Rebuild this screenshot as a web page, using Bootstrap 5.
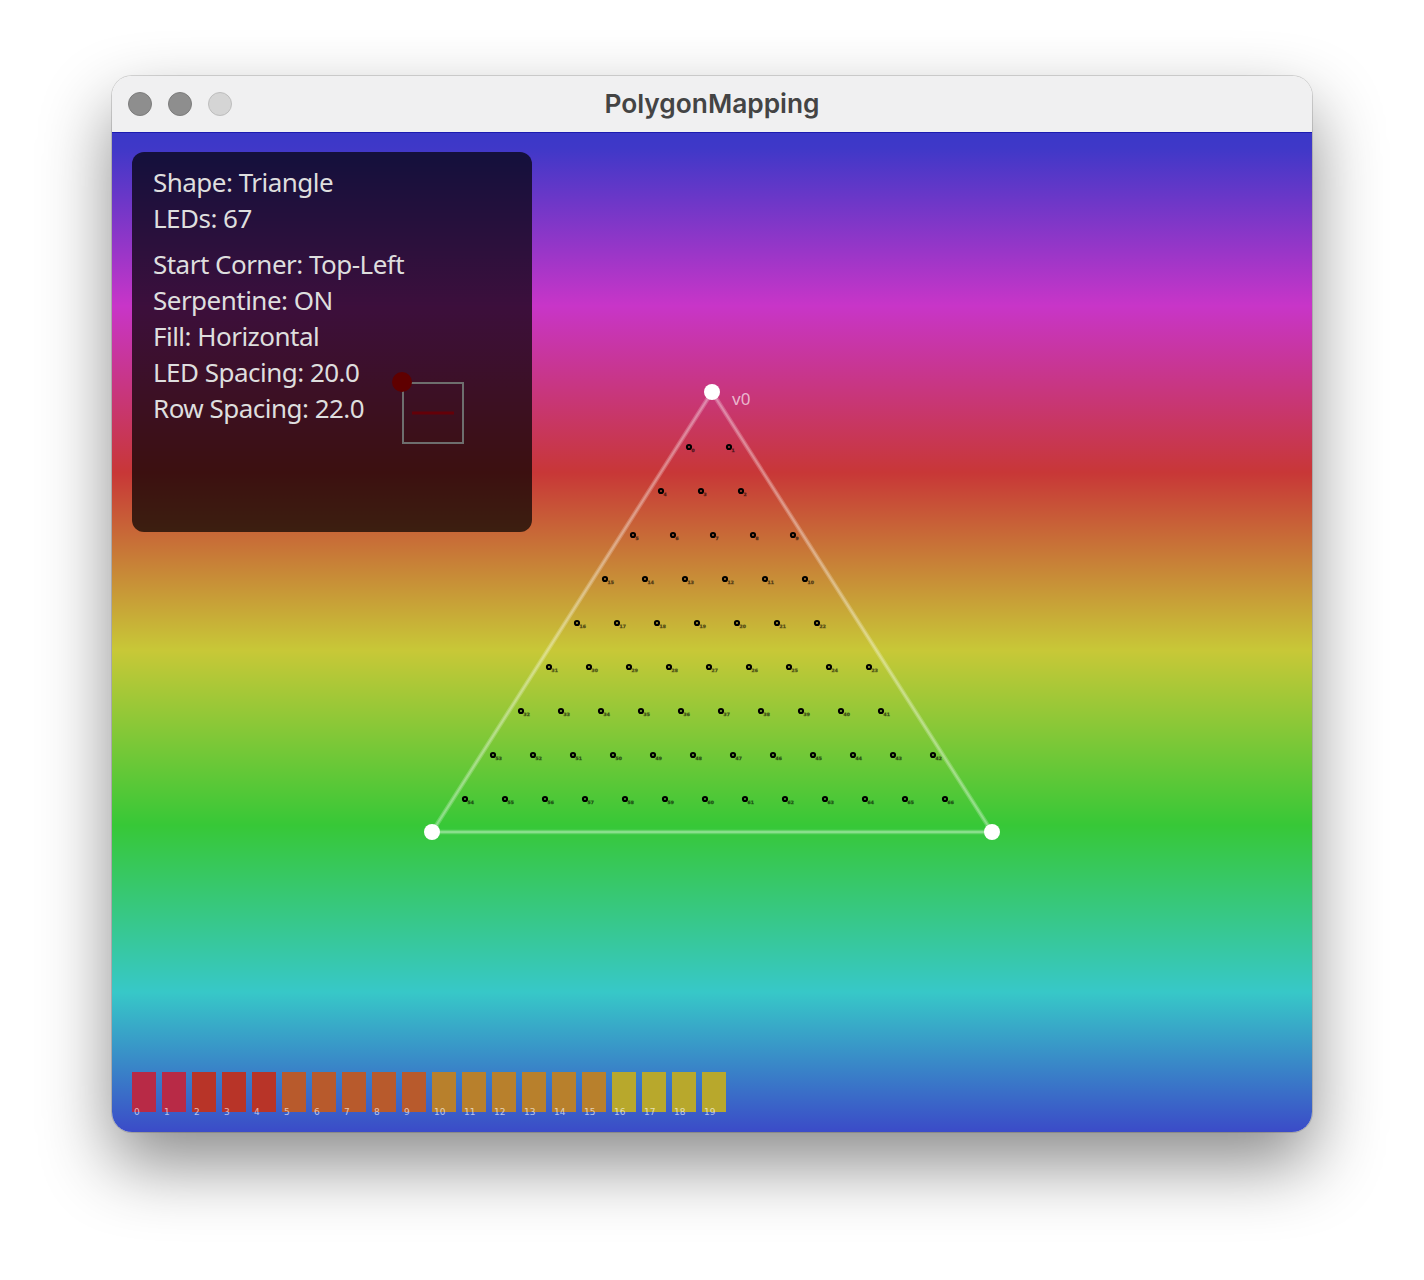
<!DOCTYPE html>
<html lang="en">
<head>
    <meta charset="UTF-8">
    <meta name="viewport" content="width=device-width, initial-scale=1.0">
    <title>PolygonMapping</title>
    <link href="https://cdn.jsdelivr.net/npm/bootstrap@5.3.0/dist/css/bootstrap.min.css" rel="stylesheet">
    <style>
        body {
            background-color: #fff;
            padding: 76px 112px 0;
            height: 1280px;
            overflow: hidden;
        }

        .app-window {
            width: 1200px;
            border-radius: 20px;
            overflow: hidden;
        }

        .window-frame {
            width: 1200px;
            border-radius: 20px;
            box-shadow: 0 32px 70px 0 rgba(0, 0, 0, 0.46), 0 0 0 1px rgba(0, 0, 0, 0.14);
        }

        .title-bar {
            height: 56px;
            background-color: #f0f0f1;
        }

        .title-text {
            font-family: Inter, sans-serif;
            font-weight: 600;
            font-size: 26.3px;
            color: #444;
        }

        .traffic-lights {
            left: 16px;
            top: 16px;
            gap: 16px;
        }

        .light {
            width: 24px;
            height: 24px;
            border-radius: 50%;
            background-color: #8e8e8e;
            border: 1px solid #7c7c7c;
        }

        .light-off {
            background-color: #d5d5d5;
            border-color: #bdbdbd;
        }

        .stage {
            height: 1000px;
            border-top: 1px solid #1c1cb0;
            background: linear-gradient(180deg, #3b38c8 0%, #3f38c8 1.5%, #c835c8 17.3%, #c83737 34%, #c8c837 51.8%, #37c837 69.3%, #37c8c8 86%, #3b4bc8 100%);
        }

        .stage-svg {
            left: 0;
            top: -1px;
        }

        .info-panel {
            left: 20px;
            top: 19px;
            width: 400px;
            height: 380px;
            padding: 12px 21px;
            border-radius: 12px;
            background-color: rgba(0, 0, 0, 0.7);
            color: #dedede;
            font-family: "Noto Sans", sans-serif;
            font-size: 26px;
            line-height: 36px;
            letter-spacing: -0.52px;
        }

        .info-gap {
            margin-top: 10px;
        }

        .panel-svg {
            left: 258px;
            top: 218px;
        }

        .swatch-row {
            left: 20px;
            top: 939px;
            gap: 6px;
        }

        .swatch {
            width: 24px;
            height: 40px;
        }

        .swatch-label {
            left: 2px;
            top: 35px;
            font-family: "DejaVu Sans", sans-serif;
            font-size: 9px;
            line-height: 11px;
            color: rgba(255, 255, 255, 0.65);
        }

        .led-label {
            font-family: "DejaVu Sans", sans-serif;
            font-weight: 700;
            font-size: 4.5px;
            fill: rgba(0, 0, 0, 0.5);
            stroke: rgba(0, 0, 0, 0.25);
            stroke-width: 0.8px;
        }

        .vertex-label {
            font-family: "Noto Sans", sans-serif;
            font-size: 17px;
            fill: rgba(255, 255, 255, 0.65);
        }
    </style>
</head>
<body>
    <div class="window-frame">
        <div class="app-window">
            <!-- Title bar -->
            <div class="title-bar position-relative d-flex align-items-center justify-content-center">
                <div class="traffic-lights position-absolute d-flex">
                    <div class="light"></div>
                    <div class="light"></div>
                    <div class="light light-off"></div>
                </div>
                <span class="title-text">PolygonMapping</span>
            </div>

            <!-- Canvas -->
            <div class="stage position-relative">
                <svg id="stageSvg" class="stage-svg position-absolute" width="1200" height="1000" viewBox="0 0 1200 1000">
                    <polygon points="600,260 320,700 880,700" fill="none" stroke="#fff" stroke-opacity="0.22" stroke-width="4.5"></polygon>
                    <polygon points="600,260 320,700 880,700" fill="none" stroke="#fff" stroke-opacity="0.25" stroke-width="2"></polygon>
                    <circle cx="600" cy="260" r="8" fill="#fff"></circle>
                    <circle cx="320" cy="700" r="8" fill="#fff"></circle>
                    <circle cx="880" cy="700" r="8" fill="#fff"></circle>
                    <text class="vertex-label" x="620" y="273">v0</text>
                </svg>

                <div class="info-panel position-absolute">
                    <div>Shape: Triangle</div>
                    <div>LEDs: 67</div>
                    <div class="info-gap">Start Corner: Top-Left</div>
                    <div>Serpentine: ON</div>
                    <div>Fill: Horizontal</div>
                    <div>LED Spacing: 20.0</div>
                    <div>Row Spacing: 22.0</div>
                    <svg class="panel-svg position-absolute" width="84" height="84" viewBox="0 0 84 84">
                        <rect x="13" y="13" width="60" height="60" fill="none" stroke="#6e6e6e" stroke-width="2"></rect>
                        <line x1="22" y1="43" x2="64" y2="43" stroke="#640008" stroke-width="3"></line>
                        <circle cx="12" cy="12" r="10" fill="#5f0000"></circle>
                    </svg>
                </div>

                <div id="swatches" class="swatch-row position-absolute d-flex"></div>
            </div>
        </div>
    </div>

    <script src="https://cdn.jsdelivr.net/npm/bootstrap@5.3.0/dist/js/bootstrap.bundle.min.js"></script>
    <script>
        // led count per row, first x moves 28 left and y 44 down each row
        const rowCounts = [2, 3, 5, 6, 7, 9, 10, 12, 13];
        const svg = document.getElementById('stageSvg');
        let markup = '';
        let index = 0;

        rowCounts.forEach((count, rowIndex) => {
            const startX = 577 - rowIndex * 28;
            const y = 315 + rowIndex * 44;
            for (let i = 0; i < count; i++) {
                // serpentine numbering, odd rows run backwards
                const pos = rowIndex % 2 ? count - 1 - i : i;
                const x = startX + pos * 40;
                markup += `<text class="led-label" x="${x + 2.5}" y="${y + 5}">${index}</text>`;
                markup += `<circle cx="${x}" cy="${y}" r="2" fill="none" stroke="#000" stroke-width="2.2"></circle>`;
                index++;
            }
        });
        svg.insertAdjacentHTML('beforeend', markup);

        const swatchColors = ['#b82a46', '#b82a46', '#b83428', '#b83428', '#b83428',
            '#b85a2c', '#b85a2c', '#b85a2c', '#b85a2c', '#b85a2c',
            '#b8802c', '#b8802c', '#b8802c', '#b8802c', '#b8802c', '#b8802c',
            '#b8a82c', '#b8a82c', '#b8a82c', '#b8a82c'];

        document.getElementById('swatches').innerHTML = swatchColors.map((color, i) => `
            <div class="swatch position-relative" style="background-color: ${color}">
                <span class="swatch-label position-absolute">${i}</span>
            </div>
        `).join('');
    </script>
</body>
</html>
